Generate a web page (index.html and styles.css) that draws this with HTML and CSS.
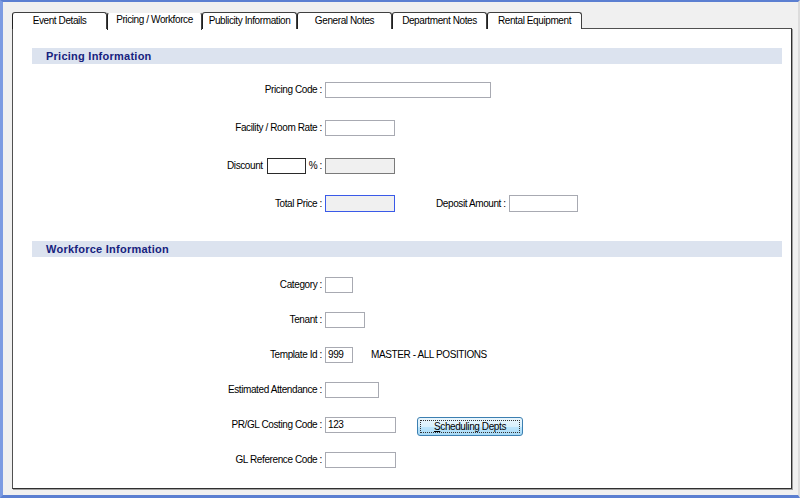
FILE: index.html
```html
<!DOCTYPE html>
<html lang="en">
<head>
    <meta charset="UTF-8">
    <title>Event - Pricing / Workforce</title>
    <link rel="stylesheet" href="styles.css">
</head>
<body>
    <div class="window">
        <div class="tabs">
            <div class="tab">Event Details</div>
            <div class="tab active">Pricing / Workforce</div>
            <div class="tab">Publicity Information</div>
            <div class="tab">General Notes</div>
            <div class="tab">Department Notes</div>
            <div class="tab">Rental Equipment</div>
        </div>

        <div class="panel">
            <div class="section-title">Pricing Information</div>
            <div class="rows pricing">
                <div class="row">
                    <div class="label">Pricing Code :</div>
                    <input type="text" class="field w166">
                </div>
                <div class="row">
                    <div class="label">Facility / Room Rate :</div>
                    <input type="text" class="field w70">
                </div>
                <div class="row">
                    <div class="label"><span>Discount</span><input type="text" class="field dark w39 discount"><span>% :</span></div>
                    <input type="text" class="field readonly w70" readonly>
                </div>
                <div class="row tall">
                    <div class="label">Total Price :</div>
                    <input type="text" class="field readonly focused w70" readonly>
                    <div class="deposit">Deposit Amount :</div>
                    <input type="text" class="field w69">
                </div>
            </div>

            <div class="section-title second">Workforce Information</div>
            <div class="rows workforce">
                <div class="row">
                    <div class="label">Category :</div>
                    <input type="text" class="field w28">
                </div>
                <div class="row">
                    <div class="label">Tenant :</div>
                    <input type="text" class="field w40">
                </div>
                <div class="row">
                    <div class="label">Template Id :</div>
                    <input type="text" class="field w28" value="999">
                    <div class="template-name">MASTER - ALL POSITIONS</div>
                </div>
                <div class="row">
                    <div class="label">Estimated Attendance :</div>
                    <input type="text" class="field w54">
                </div>
                <div class="row">
                    <div class="label">PR/GL Costing Code :</div>
                    <input type="text" class="field w71" value="123">
                    <button class="btn"><span><u>S</u>cheduling Depts</span></button>
                </div>
                <div class="row">
                    <div class="label">GL Reference Code :</div>
                    <input type="text" class="field w71">
                </div>
            </div>
        </div>
    </div>
</body>
</html>
```

FILE: styles.css
```css
* {
    margin: 0;
    padding: 0;
    box-sizing: border-box;
}

body {
    font-family: 'Liberation Sans', Arial, sans-serif;
    font-size: 10px;
    letter-spacing: -0.4px;
    color: #000;
    background: #f0f0f0;
}

.window {
    width: 800px;
    height: 498px;
    background: #f0f0f0;
    border-top: 2px solid #5b7fd1;
    border-left: 3px solid #7c9be2;
    border-bottom: 3px solid #5b7fd1;
    border-right: 2px solid #dcdcdc;
    padding: 10px 0 0 9px;
}

/* tab strip */
.tabs {
    display: flex;
    height: 17px;
    position: relative;
    z-index: 1;
}

.tab {
    width: 95px;
    height: 17px;
    border: 1px solid #404040;
    border-bottom: none;
    border-left-color: #202020;
    border-radius: 3px 3px 0 0;
    background: #fff;
    text-align: center;
    line-height: 16px;
    box-shadow: inset 1px 1px 0 #fff;
}

.tab.active {
    height: 18px;
    line-height: 14px;
    border-top-color: #f0f0f0;
    border-left-color: #202020;
}

/* panel */
.panel {
    width: 780px;
    height: 461px;
    margin-top: -1px;
    background: #fff;
    border: 1px solid #505050;
    border-right-color: #303030;
    border-bottom-color: #303030;
    box-shadow: 1px 1px 0 #a0a0a0;
    padding-top: 19px;
}

.section-title {
    margin: 0 9px 0 19px;
    height: 16px;
    line-height: 16px;
    padding-left: 14px;
    background: #dce3ef;
    color: #16227e;
    font-size: 11px;
    font-weight: bold;
    letter-spacing: 0.25px;
}

.section-title.second {
    margin-top: 29px;
}

.rows {
    display: flex;
    flex-direction: column;
}

.pricing {
    margin-top: 17px;
    gap: 21px;
}

.workforce {
    margin-top: 19px;
    gap: 18px;
}

.row {
    display: flex;
    align-items: center;
    height: 17px;
}

.label {
    width: 309px;
    margin-right: 3px;
    display: flex;
    justify-content: flex-end;
    align-items: center;
    white-space: pre;
}

.field {
    height: 16px;
    border: 1px solid #a8aab2;
    background: #fff;
    font-family: inherit;
    font-size: 10px;
    letter-spacing: -0.4px;
    padding: 0 2px;
    outline: none;
}

.field.discount {
    margin: 0 3px 0 4px;
}

.tall .field {
    height: 17px;
}

.field.dark {
    border-color: #2a2a2a;
}

.field.readonly {
    background: #f0f0f0;
    border-color: #7a7a7a;
}

.field.focused {
    border-color: #3a5ae8;
}

.w28 { width: 28px; }
.w39 { width: 39px; }
.w40 { width: 40px; }
.w54 { width: 54px; }
.w69 { width: 69px; }
.w70 { width: 70px; }
.w71 { width: 71px; }
.w166 { width: 166px; }

.deposit {
    margin-left: 41px;
    margin-right: 3px;
}

.template-name {
    margin-left: 18px;
}

.btn {
    margin-left: 21px;
    margin-top: 3px;
    width: 106px;
    height: 19px;
    border: 1px solid #3c7fb1;
    border-radius: 3px;
    background: linear-gradient(#eaf6fd 0%, #d9f0fc 50%, #bee6fd 51%, #a7d9f5 100%);
    font-family: inherit;
    font-size: 10px;
    letter-spacing: -0.4px;
    padding: 2px;
}

.btn span {
    display: block;
    height: 13px;
    line-height: 12px;
    border: 1px dotted #333;
}
```
